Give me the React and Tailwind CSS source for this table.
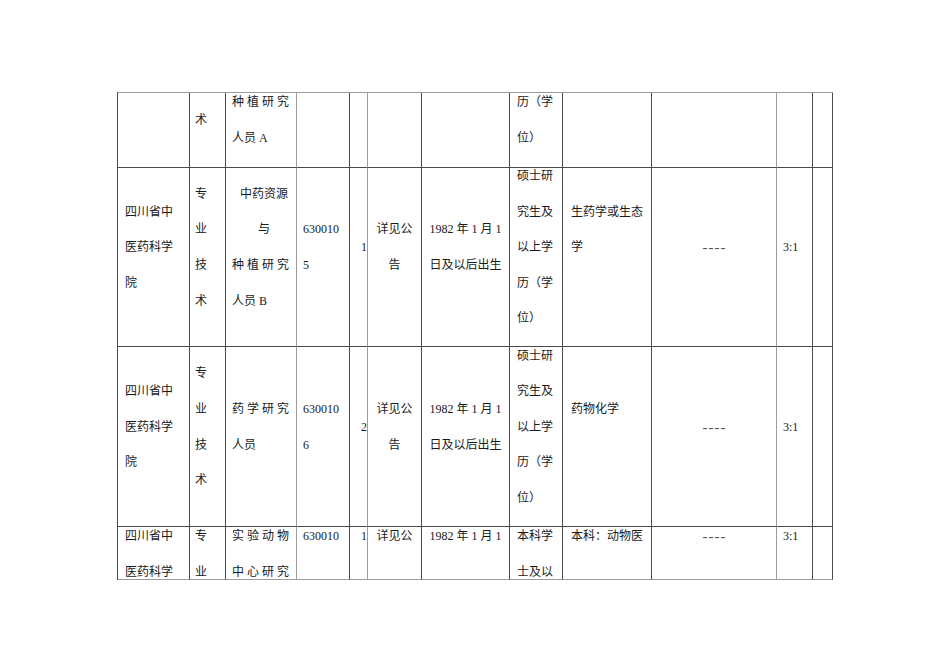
const DARK = 'border-r-[#4a4a4a]';
const LIGHT = 'border-r-[#9c9c9c]';

// per column: right line colour and text placement
const columns = [
  { line: DARK, cls: 'pl-[7px] text-left' },
  { line: DARK, cls: 'pl-[5px] text-left' },
  { line: LIGHT, cls: 'pl-[6px] text-left' },
  { line: DARK, cls: 'pl-[6px] text-left' },
  { line: LIGHT, cls: 'pr-0 text-right' },
  { line: DARK, cls: 'text-center' },
  { line: DARK, cls: 'text-center' },
  { line: DARK, cls: 'pl-[7px] text-left' },
  { line: DARK, cls: 'pl-[8px] text-left' },
  { line: LIGHT, cls: 'text-center' },
  { line: DARK, cls: 'pl-[6px] text-left' },
  { line: DARK, cls: '' },
];

const spaced = (t) => ({ t, cls: 'tracking-[3px]' });
const mid = (t) => ({ t, cls: 'text-center' });
const dash = { t: '----', cls: 'text-[15px] tracking-[1px] pl-[1px] text-[#555]' };

const rows = [
  {
    h: 'h-[75px]',
    cells: [
      [],
      ['术'],
      [spaced('种植研究'), '人员 A'],
      [],
      [],
      [],
      [],
      ['历（学', '位）'],
      [],
      [],
      [],
      [],
    ],
  },
  {
    h: 'h-[179px]',
    cells: [
      ['四川省中', '医药科学', '院'],
      ['专', '业', '技', '术'],
      [mid('中药资源'), mid('与'), spaced('种植研究'), '人员 B'],
      ['630010', '5'],
      ['1'],
      ['详见公', '告'],
      ['1982 年 1 月 1', '日及以后出生'],
      ['硕士研', '究生及', '以上学', '历（学', '位）'],
      ['生药学或生态', '学', ''],
      [dash],
      ['3:1'],
      [],
    ],
  },
  {
    h: 'h-[180px]',
    cells: [
      ['四川省中', '医药科学', '院'],
      ['专', '业', '技', '术'],
      [spaced('药学研究'), '人员'],
      ['630010', '6'],
      ['2'],
      ['详见公', '告'],
      ['1982 年 1 月 1', '日及以后出生'],
      ['硕士研', '究生及', '以上学', '历（学', '位）'],
      ['药物化学', ''],
      [dash],
      ['3:1'],
      [],
    ],
  },
  {
    h: 'h-[53px]',
    top: true,
    cells: [
      ['四川省中', '医药科学'],
      ['专', '业'],
      [spaced('实验动物'), spaced('中心研究')],
      ['630010'],
      ['1'],
      ['详见公'],
      ['1982 年 1 月 1'],
      ['本科学', '士及以'],
      ['本科：动物医'],
      [dash],
      ['3:1'],
      [],
    ],
  },
];

function Cell({ lines, col, h, top, last }) {
  return (
    <div
      className={`flex flex-col overflow-hidden border-r border-b ${col.line} ${
        last ? 'border-b-[#9c9c9c]' : 'border-b-[#4a4a4a]'
      } ${h} ${top ? 'justify-start pt-[1px]' : 'justify-center'} ${col.cls}`}
    >
      {lines.map((ln, i) => {
        const item = typeof ln === 'string' ? { t: ln, cls: '' } : ln;
        return (
          <div key={i} className={`h-[35.6px] shrink-0 whitespace-nowrap leading-[17px] ${item.cls}`}>
            {item.t}
          </div>
        );
      })}
    </div>
  );
}

export default function App() {
  return (
    <div className="min-h-[672px] w-[950px] bg-white pt-[92px] pl-[117px] text-[12px] text-[#1a1a1a] font-['Liberation_Serif','Noto_Sans_CJK_SC',serif]">
      <div className="grid w-fit grid-cols-[72px_36px_71px_53px_18px_54px_88px_53px_89px_125px_36px_20px] border-t border-l border-t-[#9c9c9c] border-l-[#4a4a4a]">
        {rows.map((row, r) =>
          row.cells.map((lines, c) => (
            <Cell
              key={`${r}-${c}`}
              lines={lines}
              col={columns[c]}
              h={row.h}
              top={row.top}
              last={r === rows.length - 1}
            />
          ))
        )}
      </div>
    </div>
  );
}
